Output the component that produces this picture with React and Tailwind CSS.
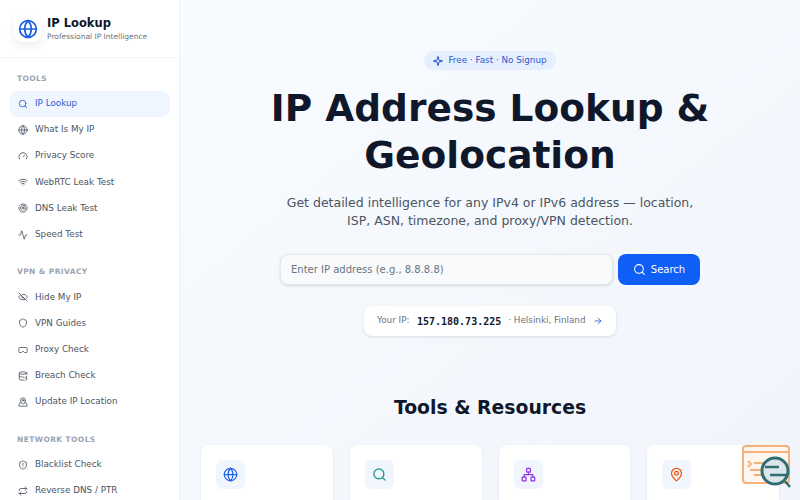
import {
  Activity,
  ArrowRight,
  DatabaseZap,
  EyeOff,
  Gauge,
  Globe,
  MapPin,
  MapPinned,
  Network,
  Radar,
  RectangleGoggles,
  Repeat,
  Search,
  Shield,
  ShieldAlert,
  Sparkle,
  Wifi,
} from "lucide-react";

const sections = [
  {
    title: "TOOLS",
    items: [
      { label: "IP Lookup", icon: Search, active: true },
      { label: "What Is My IP", icon: Globe },
      { label: "Privacy Score", icon: Gauge },
      { label: "WebRTC Leak Test", icon: Wifi },
      { label: "DNS Leak Test", icon: Radar },
      { label: "Speed Test", icon: Activity },
    ],
  },
  {
    title: "VPN & PRIVACY",
    items: [
      { label: "Hide My IP", icon: EyeOff },
      { label: "VPN Guides", icon: Shield },
      { label: "Proxy Check", icon: RectangleGoggles },
      { label: "Breach Check", icon: DatabaseZap },
      { label: "Update IP Location", icon: MapPinned },
    ],
  },
  {
    title: "NETWORK TOOLS",
    items: [
      { label: "Blacklist Check", icon: ShieldAlert },
      { label: "Reverse DNS / PTR", icon: Repeat },
    ],
  },
];

const cards = [
  { icon: Globe, color: "text-[#2563eb]" },
  { icon: Search, color: "text-[#0d9488]" },
  { icon: Network, color: "text-[#9333ea]" },
  { icon: MapPin, color: "text-[#ea580c]" },
];

function Sidebar() {
  return (
    <aside className="w-[180px] h-[500px] shrink-0 overflow-hidden bg-white border-r border-[#eef1f6]">
      <div className="h-[58px] flex items-center gap-[6px] pl-[14px] border-b border-[#f1f4f8]">
        <div className="w-[27px] h-[27px] flex items-center justify-center rounded-lg bg-white shadow-[0_4px_8px_rgba(15,23,42,0.08)]">
          <Globe className="w-[20px] h-[20px] text-[#1d5fe0]" strokeWidth={2} />
        </div>
        <div>
          <div className="text-[11.5px] leading-[16px] font-bold text-[#0f172a]">IP Lookup</div>
          <div className="text-[7.5px] leading-[12px] text-[#6b7280]">Professional IP Intelligence</div>
        </div>
      </div>
      <nav className="pl-[10px] pr-[9px] pt-[13.5px]">
        {sections.map((section) => (
          <div key={section.title} className="mb-[17.5px]">
            <div className="h-[13px] px-[7px] mb-[6px] text-[7.5px] leading-[13px] font-bold tracking-[0.4px] text-[#9ca3af]">
              {section.title}
            </div>
            {section.items.map((item) => {
              const Icon = item.icon;
              return (
                <div
                  key={item.label}
                  className={
                    item.active
                      ? "h-[26.2px] flex items-center gap-[7px] px-[8px] rounded-lg bg-[#eff6ff] text-[#2f5bd0] text-[8.8px]"
                      : "h-[26.2px] flex items-center gap-[7px] px-[8px] rounded-lg text-[#4b5563] text-[8.8px]"
                  }
                >
                  <Icon className="w-[10px] h-[10px] shrink-0" strokeWidth={2} />
                  <span className="whitespace-nowrap">{item.label}</span>
                </div>
              );
            })}
          </div>
        ))}
      </nav>
    </aside>
  );
}

function Hero() {
  return (
    <section className="flex flex-col items-center pt-[51px]">
      <div className="h-[19px] flex items-center gap-[5px] px-[9px] rounded-full bg-[#e6effd] text-[#2f5bd0] text-[8.8px]">
        <Sparkle className="w-[10px] h-[10px]" strokeWidth={2.5} />
        <span>Free · Fast · No Signup</span>
      </div>
      <h1 className="mt-[15px] w-[480px] text-center text-[37.5px] leading-[47px] font-bold text-[#0f172a]">
        IP Address Lookup & Geolocation
      </h1>
      <p className="mt-[15px] w-[420px] text-center text-[12.5px] leading-[18px] text-[#4b5563]">
        Get detailed intelligence for any IPv4 or IPv6 address — location, ISP, ASN, timezone, and proxy/VPN detection.
      </p>
      <div className="mt-[24px] flex items-center gap-[5px]">
        <div className="w-[333px] h-[31px] flex items-center px-[10px] rounded-lg border border-[#e2e8f0] bg-[#f8fafc] text-[10px] text-[#6b7280] shadow-sm">
          Enter IP address (e.g., 8.8.8.8)
        </div>
        <div className="w-[82px] h-[31px] flex items-center justify-center gap-[5px] rounded-lg bg-[#0f5ef5] text-white text-[10px]">
          <Search className="w-[13px] h-[13px]" />
          <span>Search</span>
        </div>
      </div>
      <div className="mt-[21px] h-[30px] flex items-center pl-[13.5px] pr-[13px] rounded-lg bg-white shadow-[0_1px_3px_rgba(15,23,42,0.12)] text-[8.8px] text-[#6b7280]">
        <span>Your IP:</span>
        <span className="ml-[7.5px] font-['DejaVu_Sans_Mono',monospace] font-bold text-[10px] text-[#0f172a]">157.180.73.225</span>
        <span className="ml-[7px]">· Helsinki, Finland</span>
        <ArrowRight className="ml-[8px] w-[10px] h-[10px] text-[#2f5bd0]" />
      </div>
    </section>
  );
}

function Tools() {
  return (
    <section className="mt-[58px] px-[21px]">
      <h2 className="text-center text-[18.8px] leading-[28px] font-bold text-[#0f172a]">Tools & Resources</h2>
      <div className="mt-[23px] grid grid-cols-4 gap-[17px]">
        {cards.map((card, i) => {
          const Icon = card.icon;
          return (
            <div key={i} className="h-[120px] p-[15px] rounded-lg bg-white shadow-[0_1px_3px_rgba(15,23,42,0.08)]">
              <div className="w-[29px] h-[29px] flex items-center justify-center rounded-md bg-[#f1f5fd]">
                <Icon className={`w-[15px] h-[15px] ${card.color}`} strokeWidth={2} />
              </div>
            </div>
          );
        })}
      </div>
    </section>
  );
}

function FloatingBadge() {
  return (
    <svg className="absolute left-[742px] top-[445px]" width="50" height="46" viewBox="0 0 50 46" fill="none">
      <rect x="1" y="1" width="46" height="37" rx="3" fill="#fdf6ee" stroke="#f3b27c" strokeWidth="2" />
      <path d="M1 7H47" stroke="#f3b27c" strokeWidth="2" />
      <path d="M6 16l3 3-3 3M12 18h12M8 25h14M12 30h12" stroke="#f3b27c" strokeWidth="2" />
      <circle cx="33" cy="26" r="13" fill="#dde6ec" stroke="#2f6f73" strokeWidth="3" />
      <path d="M23 22h14M28 30h16M43 36l5 6" stroke="#2f6f73" strokeWidth="2.5" />
    </svg>
  );
}

export default function App() {
  return (
    <div className="relative w-[800px] h-[500px] overflow-hidden flex font-['DejaVu_Sans',sans-serif] bg-[#f5f8fd]">
      <Sidebar />
      <main className="flex-1 h-[500px] overflow-hidden bg-gradient-to-br from-[#f8fbff] to-[#f1f5fb]">
        <Hero />
        <Tools />
      </main>
      <FloatingBadge />
    </div>
  );
}
